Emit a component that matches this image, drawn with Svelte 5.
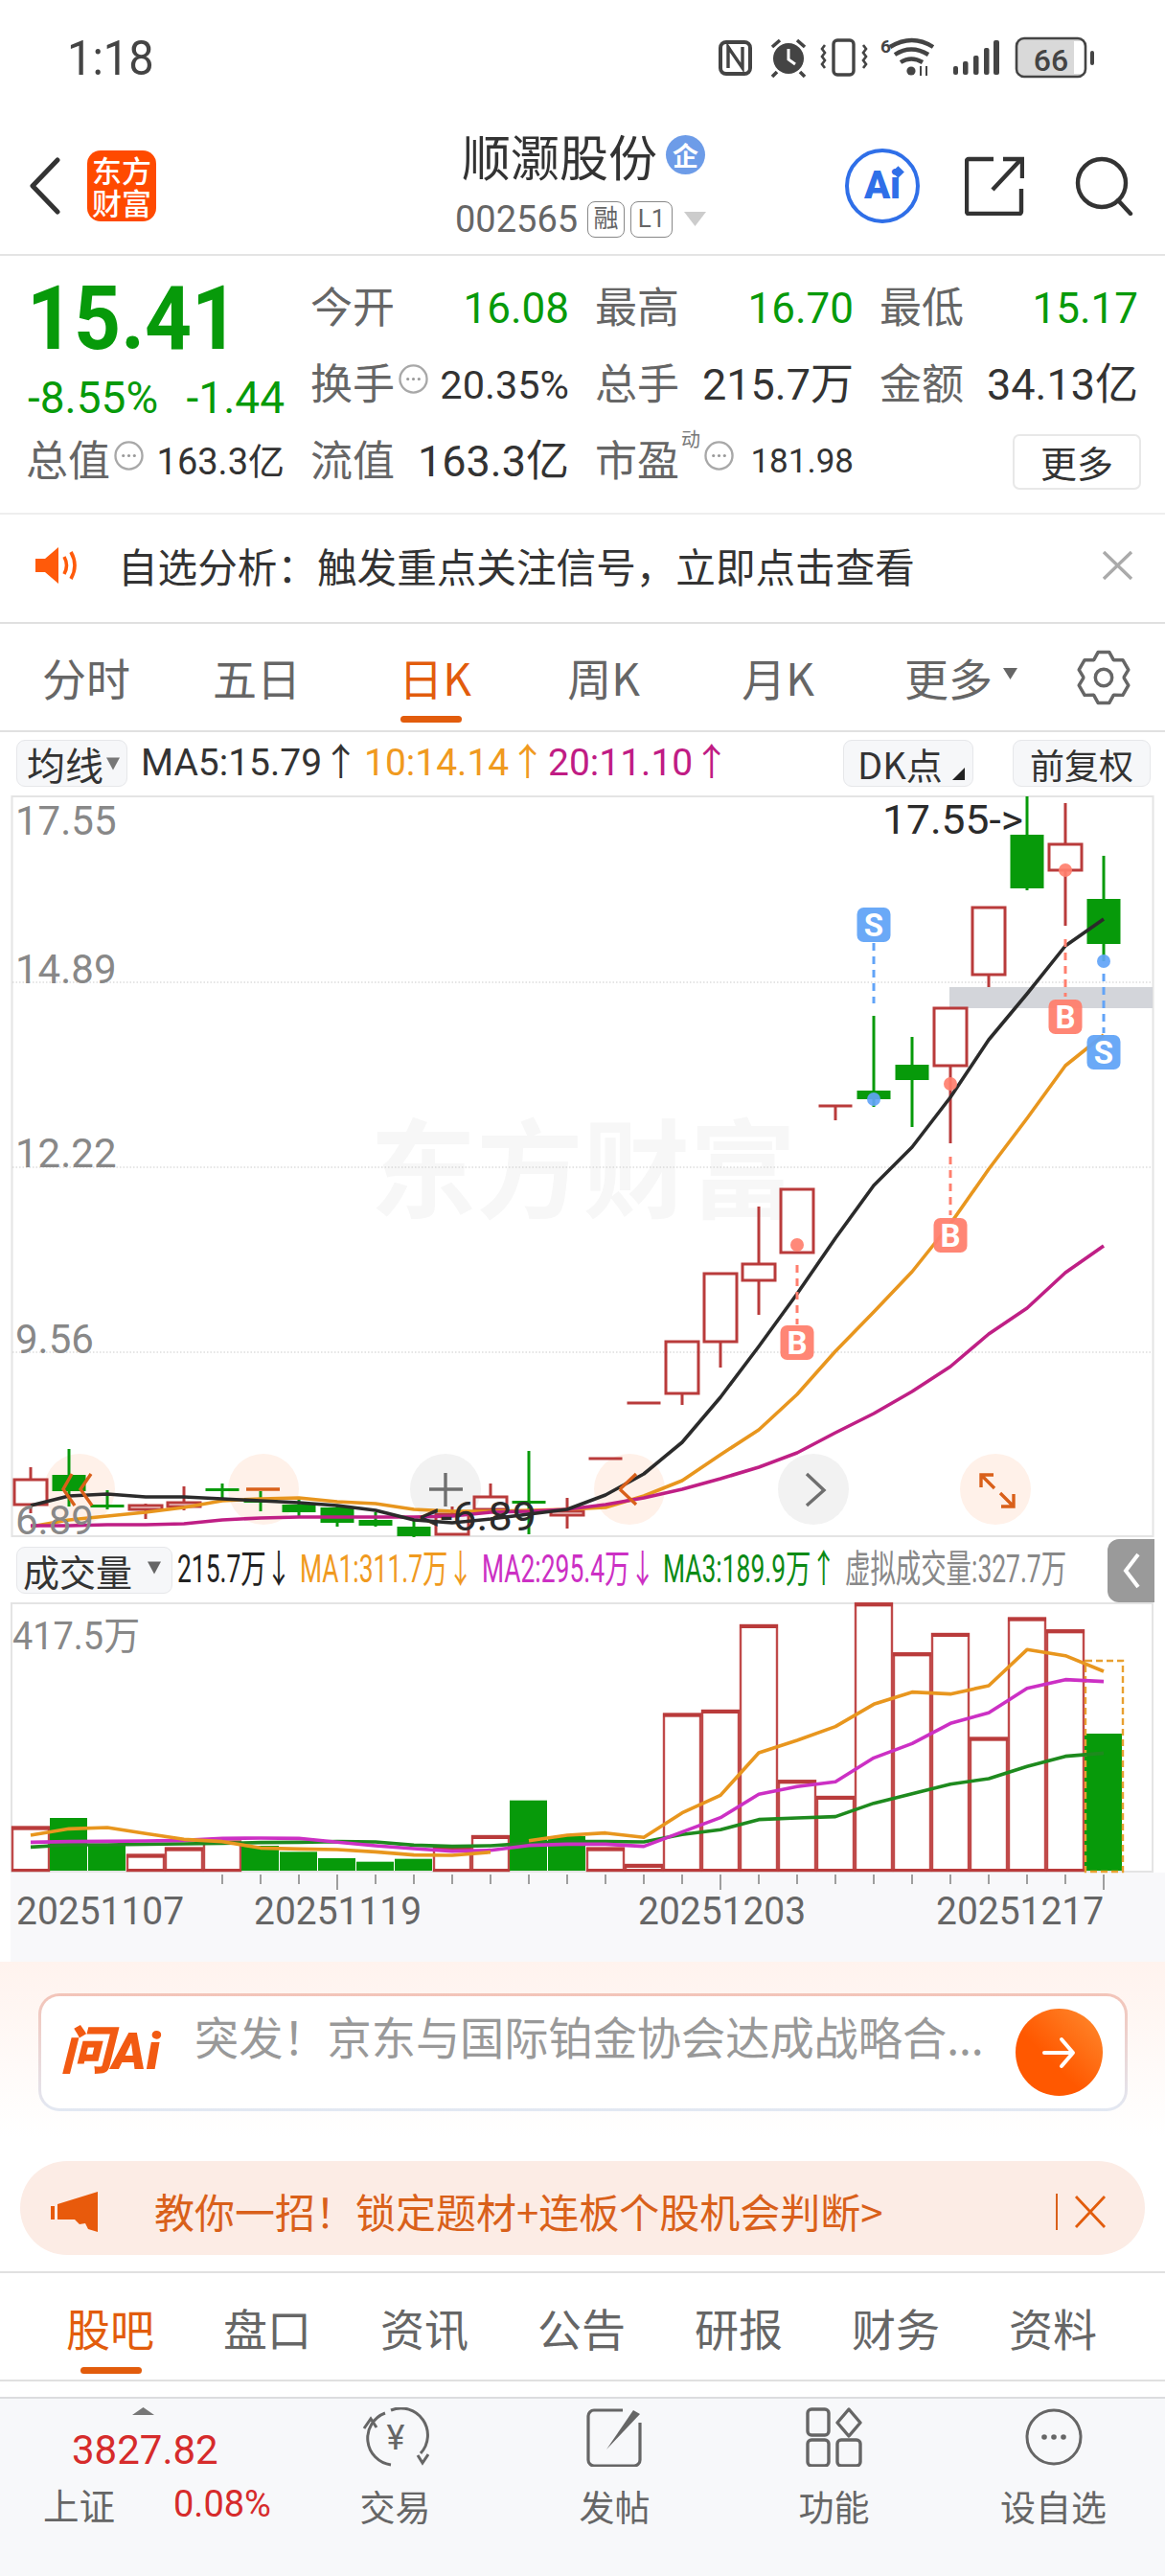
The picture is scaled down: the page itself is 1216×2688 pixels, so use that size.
<script>
  const X = (i) => 32 + 40 * i;
  const poly = (arr, start = 0) => arr.map((y, i) => `${X(i + start)},${y}`).join(' ');

  // [body top, body bottom, wick top, wick bottom, kind]
  const candles = [
    [1544, 1570, 1531, 1579, 'r'], [1539, 1556, 1512, 1572, 'g'], [1570, 1573, 1555, 1575, 'g'],
    [1571, 1575, 1569, 1585, 'r'], [1568, 1572, 1551, 1576, 'r'], [1553, 1555, 1548, 1565, 'g'],
    [1565, 1568, 1556, 1577, 'g'], [1570, 1578, 1565, 1583, 'g'], [1573, 1589, 1570, 1593, 'g'],
    [1586, 1592, 1578, 1593, 'g'], [1593, 1603, 1587, 1604, 'g'], [1580, 1601, 1572, 1601, 'r'],
    [1562, 1575, 1548, 1575, 'r'], [1566, 1568, 1514, 1601, 'g'], [1577, 1581, 1563, 1595, 'r'],
    [1522, 1522, 1522, 1522, 'r'], [1464, 1464, 1464, 1464, 'r'], [1400, 1454, 1400, 1466, 'r'],
    [1329, 1400, 1329, 1427, 'r'], [1319, 1336, 1259, 1372, 'r'], [1241, 1307, 1241, 1307, 'r'],
    [1154, 1154, 1154, 1169, 'r'], [1138, 1147, 1060, 1155, 'g'], [1111, 1127, 1082, 1176, 'g'],
    [1052, 1112, 1052, 1193, 'r'], [947, 1017, 947, 1030, 'r'], [871, 927, 831, 929, 'g'],
    [881, 908, 838, 966, 'r'], [938, 985, 893, 1003, 'g']
  ];

  const maBlack = [1571,1561,1559,1562,1562,1564,1566,1568,1571,1576,1586,1589,1585,1580,1575,1560,1538,1505,1458,1405,1350,1292,1237,1197,1145,1085,1037,987,959];
  const maOrange = [1593,1586,1582,1578,1573,1566,1564,1563,1567,1569,1575,1577,1577,1576,1575,1573,1561,1545,1518,1492,1455,1410,1369,1327,1277,1220,1167,1112,1080];
  const maPink = [1592,1592,1591,1591,1590,1586,1584,1583,1583,1583,1583,1582,1578,1577,1575,1570,1563,1554,1543,1531,1516,1495,1475,1452,1426,1392,1365,1328,1300];

  const gridLines = [1025, 1218, 1411];
  const axisLabels = [['17.55', 871], ['14.89', 1026], ['12.22', 1218], ['9.56', 1412], ['6.89', 1601]];

  const buttons = [[83, 'o'], [275, 'o'], [465, 'n'], [657, 'o'], [849, 'n'], [1039, 'o']];

  const marks = [
    { i: 22, t: 'S', box: 947, dot: 1147, d1: 984, d2: 1047 },
    { i: 28, t: 'S', box: 1080, dot: 1003, d1: 1016, d2: 1078 },
    { i: 27, t: 'B', box: 1043, dot: 908, d1: 980, d2: 1040 },
    { i: 24, t: 'B', box: 1271, dot: 1131, d1: 1207, d2: 1268 },
    { i: 20, t: 'B', box: 1383, dot: 1299, d1: 1320, d2: 1382 }
  ];

  const vy = (z) => 1600 + z / 3;
  const volumes = [
    [920,'r'],[891,'g'],[972,'g'],[1007,'r'],[986,'r'],[965,'r'],[978,'g'],[997,'g'],[1017,'g'],[1028,'g'],
    [1019,'g'],[985,'r'],[948,'r'],[836,'g'],[948,'g'],[986,'r'],[1038,'r'],[566,'r'],[555,'r'],[288,'r'],
    [775,'r'],[825,'r'],[220,'r'],[376,'r'],[315,'r'],[641,'r'],[266,'r'],[304,'r'],[627,'g']
  ].map(([z, k]) => [vy(z), k]);
  const v1 = [945,925,921,940,958,965,985,988,990,997,1007,1008,998,962,945,938,952,875,820,687,648,605,535,497,503,477,364,383,432].map(vy);
  const v2 = [967,965,964,963,961,955,954,955,967,978,987,995,992,977,973,973,980,935,890,817,793,778,703,658,595,562,485,458,464].map(vy);
  const v3 = [982,975,975,973,972,970,968,967,965,966,976,980,978,970,965,965,966,943,928,896,891,887,845,815,785,768,730,698,688].map(vy);
  const ticks = Array.from({ length: 24 }, (_, k) => 232 + 40 * k);
  const dates = [['20251107', 17], ['20251119', 265], ['20251203', 666], ['20251217', 977]];

  function gearPath(cx, cy, R, r, n) {
    let d = '';
    for (let k = 0; k < n; k++) {
      const a = (Math.PI * 2 * k) / n - Math.PI / 2;
      const s = Math.PI / n;
      const p = [[a - s * 0.95, r], [a - s * 0.42, R], [a + s * 0.42, R], [a + s * 0.95, r]];
      for (const [ang, rad] of p) {
        d += `${d ? 'L' : 'M'}${(cx + rad * Math.cos(ang)).toFixed(1)} ${(cy + rad * Math.sin(ang)).toFixed(1)}`;
      }
    }
    return d + 'Z';
  }
  const gear = gearPath(30, 30, 28, 22, 6);

  const topTabs = ['分时', '五日', '日K', '周K', '月K', '更多'];
  const lowerTabs = ['股吧', '盘口', '资讯', '公告', '研报', '财务', '资料'];
</script>

{#snippet info()}
  <svg class="info" viewBox="0 0 32 32"><circle cx="16" cy="16" r="14.5" fill="none" stroke="#a8a8a8" stroke-width="2.4"/><circle cx="10" cy="16" r="1.6" fill="#999"/><circle cx="16" cy="16" r="1.6" fill="#999"/><circle cx="22" cy="16" r="1.6" fill="#999"/></svg>
{/snippet}

<div class="page">
  <header class="status">
    <span class="time">1:18</span>
    <svg class="status-icons" viewBox="750 36 396 52">
      <rect x="752" y="45" width="31" height="33" rx="6" fill="none" stroke="#444" stroke-width="4"/>
      <path d="M760 72V50l15 22V50" fill="none" stroke="#444" stroke-width="3.4"/>
      <circle cx="823" cy="62" r="16" fill="#444"/>
      <path d="M823 52v11l7 5" fill="none" stroke="#fff" stroke-width="3"/>
      <path d="M806 50l8-7M840 50l-8-7M811 76l-5 5M835 76l5 5" stroke="#444" stroke-width="3.6" fill="none"/>
      <rect x="870" y="43" width="21" height="36" rx="4" fill="none" stroke="#444" stroke-width="3.4"/>
      <path d="M861 48l-3 4 3 4-3 4 3 4-3 4 3 4M901 48l3 4-3 4 3 4-3 4 3 4-3 4" fill="none" stroke="#444" stroke-width="2.6"/>
      <text x="919" y="56" class="tiny">6</text>
      <path d="M929 50q23-14 45 0M934 58q17-11 35 0M940 66q11-7 23 0" fill="none" stroke="#444" stroke-width="4.4"/>
      <circle cx="951" cy="75" r="4.6" fill="#444"/>
      <path d="M961 70v10M967 70v10" stroke="#444" stroke-width="2"/>
      <rect x="995" y="70" width="5" height="9" rx="2" fill="#444"/>
      <rect x="1005" y="65" width="5.5" height="14" rx="2" fill="#444"/>
      <rect x="1016" y="59" width="5.5" height="20" rx="2" fill="#444"/>
      <rect x="1027" y="51" width="5.5" height="28" rx="2" fill="#444"/>
      <rect x="1037" y="43" width="6" height="36" rx="2" fill="#444"/>
      <rect x="1062" y="42" width="71" height="38" rx="8" fill="#d9d9d9"/>
      <rect x="1121" y="44" width="11" height="34" fill="#fff"/>
      <rect x="1061" y="41" width="72" height="40" rx="8" fill="none" stroke="#444" stroke-width="2.6"/>
      <rect x="1138" y="54" width="4" height="15" rx="2" fill="#444"/>
      <text x="1097" y="75" class="batt">66</text>
    </svg>
  </header>

  <nav class="nav">
    <svg class="back" viewBox="0 0 34 60"><path d="M30 3L4 30l26 27" fill="none" stroke="#333" stroke-width="5" stroke-linecap="round" stroke-linejoin="round"/></svg>
    <div class="logo"><span>东方</span><span>财富</span></div>
    <div class="title">
      <div class="title-row"><span class="name">顺灏股份</span><span class="qi">企</span></div>
      <div class="code-row">
        <span class="code">002565</span><span class="tag">融</span><span class="tag">L1</span>
        <svg class="code-tri" viewBox="0 0 23 15"><path d="M0 0h23L11.500 15z" fill="#ccc"/></svg>
      </div>
    </div>
    <div class="nav-actions">
      <div class="ai"><span>Ai</span><i></i></div>
      <svg class="share" viewBox="0 0 62 62"><path d="M30 3H4a2 2 0 0 0-2 2v53a2 2 0 0 0 2 2h53a2 2 0 0 0 2-2V34" fill="none" stroke="#333" stroke-width="4.400"/><path d="M29 35L58 4M40 3h20v20" fill="none" stroke="#333" stroke-width="4.400"/></svg>
      <svg class="search" viewBox="0 0 62 62"><circle cx="29" cy="28" r="25" fill="none" stroke="#333" stroke-width="4.400"/><path d="M46 46l13 14" stroke="#333" stroke-width="4.400" stroke-linecap="round"/></svg>
    </div>
  </nav>

  <section class="quote">
    <div class="price-cell">
      <div class="price">15.41</div>
      <div class="changes"><span>-8.55%</span><span>-1.44</span></div>
    </div>
    <div class="cell"><span class="lb">今开</span><span class="up">16.08</span></div>
    <div class="cell"><span class="lb">最高</span><span class="up">16.70</span></div>
    <div class="cell"><span class="lb">最低</span><span class="up">15.17</span></div>
    <div class="cell"><span class="lb">换手{@render info()}</span><span class="val pct">20.35%</span></div>
    <div class="cell"><span class="lb">总手</span><span class="val">215.7万</span></div>
    <div class="cell"><span class="lb">金额</span><span class="val">34.13亿</span></div>
    <div class="cell"><span class="lb">总值{@render info()}</span><span class="val small">163.3亿</span></div>
    <div class="cell"><span class="lb">流值</span><span class="val">163.3亿</span></div>
    <div class="cell"><span class="lb">市盈<sup>动</sup>{@render info()}</span><span class="val smaller">181.98</span></div>
    <div class="cell end"><button class="more">更多</button></div>
  </section>

  <section class="notice">
    <svg class="speaker" viewBox="0 0 48 40"><path d="M0 13h10L24 1v38L10 27H0z" fill="#ff5a0a"/><path d="M30 11q5 9 0 18M37 6q8 14 0 28" fill="none" stroke="#ff5a0a" stroke-width="3.600"/></svg>
    <span class="notice-text">自选分析：触发重点关注信号，立即点击查看</span>
    <svg class="close" viewBox="0 0 33 30"><path d="M2 1l29 28M31 1L2 29" stroke="#aaa" stroke-width="3.400" fill="none"/></svg>
  </section>

  <section class="tabs">
    {#each topTabs as t, i}
      <div class="tab" class:on={i === 2}>{t}{#if i === 5}<svg class="more-tri" viewBox="0 0 15 12"><path d="M0 0h15L7.500 12z" fill="#666"/></svg>{/if}</div>
    {/each}
    <svg class="gear" viewBox="0 0 60 60"><path d={gear} fill="none" stroke="#666" stroke-width="3.600" stroke-linejoin="round"/><circle cx="30" cy="30" r="9" fill="none" stroke="#666" stroke-width="3.600"/></svg>
  </section>

  <section class="ma-row">
    <div class="pill junxian">均线<svg class="pill-tri" viewBox="0 0 15 14"><path d="M0 0h15L7.500 14z" fill="#777"/></svg></div>
    <span class="ma black">MA5:15.79↑</span>
    <span class="ma orange">10:14.14↑</span>
    <span class="ma pink">20:11.10↑</span>
    <div class="pill dk">DK点<svg class="dk-tri" viewBox="0 0 14 14"><path d="M14 0v14H0z" fill="#222"/></svg></div>
    <div class="pill fq">前复权</div>
  </section>

  <svg class="price-chart" viewBox="0 830 1216 774">
    <text x="386" y="1263" class="wm" textLength="445" lengthAdjust="spacingAndGlyphs">东方财富</text>
    <rect x="12.500" y="831" width="1191" height="772" fill="none" stroke="#e4e4e4" stroke-width="2"/>
    {#each gridLines as y}
      <line x1="13" x2="1203" y1={y} y2={y} class="grid"/>
    {/each}
    <rect x="991" y="1030" width="212" height="22" fill="#d3d5da"/>
    {#each buttons as [cx, k]}
      <circle {cx} cy="1554" r="37" fill={k === 'o' ? '#fff1e9' : '#f2f2f2'}/>
    {/each}

    {#each candles as [t, b, wt, wb, k], i}
      {@const c = k === 'r' ? '#b93b3b' : '#079a0a'}
      {#if wt < t}<line x1={X(i)} x2={X(i)} y1={wt} y2={t} stroke={c} stroke-width="3"/>{/if}
      {#if wb > b}<line x1={X(i)} x2={X(i)} y1={b} y2={wb} stroke={c} stroke-width="3"/>{/if}
      {#if k === 'g'}
        <rect x={X(i) - 17.500} y={t} width="35" height={Math.max(b - t, 3)} fill={c}/>
      {:else if b === t}
        <line x1={X(i) - 17.500} x2={X(i) + 17.500} y1={t} y2={t} stroke={c} stroke-width="3"/>
      {:else}
        <rect x={X(i) - 17} y={t} width="34" height={b - t} fill="none" stroke={c} stroke-width="3"/>
      {/if}
    {/each}

    <polyline points={poly(maOrange)} class="l" stroke="#e8961e"/>
    <polyline points={poly(maPink)} class="l" stroke="#bf1f85"/>
    <polyline points={poly(maBlack)} class="l" stroke="#2b2b2b"/>

    {#each marks as m}
      {@const col = m.t === 'S' ? '#62a4f7' : '#ff7f6e'}
      <line x1={X(m.i)} x2={X(m.i)} y1={m.d1} y2={m.d2} stroke={col} stroke-width="3" stroke-dasharray="8 6"/>
      <circle cx={X(m.i)} cy={m.dot} r="7" fill={col} opacity="0.92"/>
      <rect x={X(m.i) - 17.500} y={m.box} width="35" height="36" rx="7" fill={col} opacity="0.95"/>
      <text x={X(m.i)} y={m.box + 30} class="mk">{m.t}</text>
    {/each}

    <g class="ic ico">
      <path d="M75 1538l-9 16 12 17M95 1538l-11 16 12 17"/>
      <path d="M257 1554h35"/>
      <path d="M647 1554l17-16M647 1554l17 16"/>
      <path d="M1024 1552v-13h13M1024 1539l14 14M1058 1559v13h-13M1058 1572l-14-14"/>
    </g>
    <g class="ic icn">
      <path d="M448 1554h35M465 1537v35"/>
      <path d="M842 1538l18 17-18 16"/>
    </g>

    {#each axisLabels as [t, y]}
      <text x="16" {y} class="axis">{t}</text>
    {/each}
    <text x="921" y="870" class="mark" textLength="147" lengthAdjust="spacingAndGlyphs">17.55-&gt;</text>
    <text x="437" y="1597" class="mark" textLength="123" lengthAdjust="spacingAndGlyphs">&lt;-6.89</text>
  </svg>

  <section class="vol-head">
    <div class="pill vol-pill">成交量<svg class="vol-tri" viewBox="0 0 15 14"><path d="M0 0h15L7.500 14z" fill="#666"/></svg></div>
    <span class="sq w1 black"><b>215.7万↓</b></span>
    <span class="sq w2 orange"><b>MA1:311.7万↓</b></span>
    <span class="sq w2 violet"><b>MA2:295.4万↓</b></span>
    <span class="sq w2 green"><b>MA3:189.9万↑</b></span>
    <span class="sq w3 gray"><b>虚拟成交量:327.7万</b></span>
    <div class="collapse"><svg viewBox="0 0 20 40"><path d="M17 3L4 20l13 17" fill="none" stroke="#fff" stroke-width="4"/></svg></div>
  </section>

  <svg class="vol-chart" viewBox="0 1672 1216 375">
    <rect x="11" y="1954" width="1205" height="93" fill="#f8f8fa"/>
    <rect x="12" y="1673" width="1191" height="280" fill="none" stroke="#e4e4e4" stroke-width="2"/>
    {#each volumes as [t, k], i}
      {@const x0 = 12 + 40 * i}
      {#if k === 'g'}
        <rect x={x0} y={t} width="39" height={1952 - t} fill="#079a0a"/>
      {:else}
        <rect x={x0 + 1} y={t} width="38" height={1952 - t} fill="none" stroke="#c04a4a" stroke-width="2.400"/>
        <rect x={x0} y={t - 1} width="40" height="4" fill="#b93b3b"/>
        <rect x={x0} y="1950" width="40" height="3" fill="#b93b3b"/>
      {/if}
    {/each}
    <rect x="1133" y="1733" width="39" height="220" fill="none" stroke="#e8a030" stroke-width="2.400" stroke-dasharray="7 4"/>
    <polyline points={poly(v3)} class="l" stroke="#1e8a1e"/>
    <polyline points={poly(v2)} class="l" stroke="#cc30c4"/>
    <polyline points={poly(v1.slice(0, 13))} class="l" stroke="#e8961e"/>
    <polyline points={poly(v1.slice(13), 13)} class="l" stroke="#e8961e"/>
    <text x="13" y="1721" class="vlabel" textLength="133" lengthAdjust="spacingAndGlyphs">417.5万</text>
    {#each ticks as x}
      {@const long = x === 352 || x === 752 || x === 1152}
      <line x1={x} x2={x} y1="1956" y2={long ? 1972 : 1966} stroke="#888" stroke-width="1.600"/>
    {/each}
    {#each dates as [d, x]}
      <text {x} y="2008" class="date" textLength="175" lengthAdjust="spacingAndGlyphs">{d}</text>
    {/each}
  </svg>

  <section class="ask">
    <div class="ask-card">
      <span class="ask-logo">问Ai</span>
      <span class="ask-text">突发！京东与国际铂金协会达成战略合...</span>
      <div class="ask-go"><svg viewBox="0 0 40 40"><path d="M4 20h29M22 6l12 14-12 14" fill="none" stroke="#fff" stroke-width="4" stroke-linecap="round" stroke-linejoin="round"/></svg></div>
    </div>
  </section>

  <section class="promo-wrap">
    <div class="promo">
      <svg class="horn" viewBox="0 0 49 42"><path d="M0 15h4v14H0zM7 13L49 0v42l-10-3-3-6-6 1-5-5H7z" fill="#e85a0c"/></svg>
      <span class="promo-text">教你一招！锁定题材+连板个股机会判断&gt;</span>
      <i class="promo-sep"></i>
      <svg class="promo-x" viewBox="0 0 34 34"><path d="M2 1l30 32M32 1L2 33" stroke="#e25c0c" stroke-width="2.800" fill="none"/></svg>
    </div>
  </section>

  <section class="lower-tabs">
    {#each lowerTabs as t, i}
      <div class="ltab" class:on={i === 0}>{t}</div>
    {/each}
  </section>

  <div class="spacer"></div>

  <footer class="bottom">
    <div class="index">
      <svg class="idx-tri" viewBox="0 0 23 8"><path d="M11.500 0L23 8H0z" fill="#777"/></svg>
      <div class="idx-num">3827.82</div>
      <div class="idx-row"><span class="idx-name">上证</span><span class="idx-pct">0.08%</span></div>
    </div>
    <div class="act">
      <svg viewBox="0 0 70 62"><path d="M24 6A28 28 0 0 0 30 60M30 3a28 28 0 0 1 31 45M2 22l7-10 6 9M58 50l5 8 6-9" fill="none" stroke="#666" stroke-width="3"/><text x="35" y="44" class="yen">¥</text></svg>
      <span>交易</span>
    </div>
    <div class="act">
      <svg viewBox="0 0 60 62"><path d="M38 3H8a6 6 0 0 0-6 6v46a6 6 0 0 0 6 6h42a6 6 0 0 0 6-6V16" fill="none" stroke="#666" stroke-width="3.200"/><path d="M21 44L49 3l7 4z" fill="#666"/></svg>
      <span>发帖</span>
    </div>
    <div class="act">
      <svg viewBox="0 0 60 62"><g fill="none" stroke="#666" stroke-width="3.400"><rect x="2" y="2" width="22" height="27" rx="4"/><rect x="2" y="34" width="22" height="27" rx="4"/><rect x="33" y="34" width="24" height="27" rx="4"/><path d="M45 2l12 14-12 14-12-14z" stroke-linejoin="round"/></g></svg>
      <span>功能</span>
    </div>
    <div class="act">
      <svg viewBox="0 0 60 62"><circle cx="30" cy="31" r="28" fill="none" stroke="#666" stroke-width="3"/><circle cx="20" cy="31" r="2.800" fill="#666"/><circle cx="30" cy="31" r="2.800" fill="#666"/><circle cx="40" cy="31" r="2.800" fill="#666"/></svg>
      <span>设自选</span>
    </div>
  </footer>
</div>

<style>
  :global(body) { margin: 0; background: #fff; }
  .page {
    width: 1216px; height: 2688px; overflow: hidden; background: #fff; display: flex; flex-direction: column;
    font-family: Roboto, "Noto Sans CJK SC", sans-serif; color: #333;
  }
  svg { display: block; flex: none; }

  .status { height: 122px; flex: none; display: flex; align-items: center; justify-content: space-between; padding: 0 70px; box-sizing: border-box; }
  .time { font-size: 50px; line-height: 50px; color: #444; transform: scaleX(.94); transform-origin: left; }
  .status-icons { width: 396px; height: 52px; margin-right: 0; }
  .tiny { font: 700 19px Roboto, sans-serif; fill: #444; }
  .batt { font: 500 32px Roboto, sans-serif; fill: #444; text-anchor: middle; }

  .nav { height: 143px; flex: none; display: flex; align-items: center; border-bottom: 2px solid #e4e4e4; box-sizing: content-box; }
  .back { width: 34px; height: 60px; margin-left: 30px; }
  .logo {
    width: 72px; height: 74px; margin-left: 27px; border-radius: 14px; background: #ff4a00; color: #fff; display: flex; flex-direction: column; align-items: center; justify-content: center;
    font: 500 31px/34px "Noto Sans CJK SC", sans-serif;
  }
  .logo span { display: block; height: 34px; }
  .title { margin-left: 312px; width: 262px; display: flex; flex-direction: column; }
  .title-row { display: flex; align-items: center; padding-left: 7px; height: 58px; margin-top: -6px; }
  .name { font: 400 51px/58px "Noto Sans CJK SC", sans-serif; color: #333; white-space: nowrap; }
  .qi { width: 41px; height: 41px; border-radius: 50%; background: #6d9ce8; color: #fff; margin-left: 9px; font: 700 27px/41px "Noto Sans CJK SC", sans-serif; text-align: center; }
  .code-row { display: flex; align-items: center; height: 40px; margin-top: 18px; }
  .code { font-size: 38px; line-height: 40px; color: #666; width: 138px; }
  .tag { width: 39px; height: 38px; box-sizing: border-box; border: 1.5px solid #888; border-radius: 8px; color: #666; font: 400 26px/35px Roboto, "Noto Sans CJK SC", sans-serif; text-align: center; margin-right: 6px; }
  .tag + .tag { width: 44px; }
  .code-tri { width: 23px; height: 15px; margin-left: 6px; }
  .nav-actions { margin-left: auto; margin-right: 33px; display: flex; align-items: center; }
  .ai {
    position: relative; width: 78px; height: 78px; box-sizing: border-box; border: 4px solid #2f6fe8; border-radius: 50%; color: #2f6fe8;
    font: 900 40px/70px Roboto, sans-serif; text-align: center;
  }
  .ai i { position: absolute; top: 16px; right: 14px; width: 9px; height: 9px; background: #2f6fe8; transform: rotate(45deg); }
  .share { width: 62px; height: 62px; margin-left: 47px; }
  .search { width: 62px; height: 62px; margin-left: 52px; }

  .quote {
    height: 270px; flex: none; box-sizing: border-box; padding: 15px 25px 0 29px; border-bottom: 2px solid #eee;
    display: grid; grid-template-columns: repeat(4, 268px); column-gap: 29px; grid-template-rows: repeat(3, 80px);
    font-size: 44px; line-height: 50px; white-space: nowrap;
  }
  .price-cell { grid-row: 1 / span 2; display: flex; flex-direction: column; }
  .price { color: #079a0a; font-weight: 700; font-size: 92px; line-height: 92px; margin: 5px 0 0 -1px; transform: scaleX(.93); transform-origin: left; }
  .changes { display: flex; justify-content: space-between; color: #079a0a; margin-top: 11px; font-size: 46px; }
  .cell { display: flex; align-items: center; justify-content: space-between; }
  .cell.end { justify-content: flex-end; }
  .lb { color: #666; display: flex; align-items: center; position: relative; margin-left: -2px; }
  .up { color: #079a0a; }
  .val { color: #333; font-size: 45px; }
  .val.pct { font-size: 41.500px; }
  .val.small { font-size: 38px; }
  .val.smaller { font-size: 35px; }
  .info { width: 31px; height: 31px; margin: -14px 0 0 4px; }
  sup { font-size: 20px; line-height: 20px; color: #777; align-self: flex-start; margin: -8px 0 0 2px; }
  .more {
    width: 134px; height: 58px; margin-right: -3px; border: 2px solid #e8e8e8; border-radius: 7px; background: #fff; padding: 0;
    font: 400 38px/54px "Noto Sans CJK SC", sans-serif; color: #333;
  }

  .notice { height: 114px; flex: none; box-sizing: border-box; display: flex; align-items: center; padding: 0 33px 6px 37px; border-bottom: 2px solid #e0e0e0; }
  .speaker { width: 48px; height: 40px; }
  .notice-text { margin-left: 38px; font: 400 41.6px/50px "Noto Sans CJK SC", sans-serif; color: #333; white-space: nowrap; }
  .close { width: 33px; height: 30px; margin-left: auto; }

  .tabs { height: 113px; flex: none; box-sizing: border-box; display: grid; grid-template-columns: 180px 176px 196px 156px 208px 174px 1fr; align-items: center; border-bottom: 2px solid #e0e0e0; font: 400 46px/112px "Noto Sans CJK SC", Roboto, sans-serif; color: #666; }
  .tab { position: relative; display: flex; align-items: center; justify-content: center; height: 111px; padding-bottom: 2px; box-sizing: border-box; }
  .tab.on { color: #e25c0c; }
  .tab.on::after { content: ""; position: absolute; left: 62px; width: 64px; height: 7px; bottom: 8px; border-radius: 4px; background: #e25c0c; }
  .more-tri { width: 15px; height: 12px; margin-left: 11px; margin-top: -6px; }
  .gear { width: 58px; height: 58px; margin-left: 33px; }

  .ma-row { height: 66px; flex: none; display: flex; align-items: flex-start; padding: 8px 15px 0 17px; box-sizing: border-box; white-space: nowrap; }
  .pill { box-sizing: border-box; height: 49px; border: 1.5px solid #e6e7ea; border-radius: 9px; background: #f6f7f9; display: flex; align-items: center; font: 400 40px/46px "Noto Sans CJK SC", Roboto, sans-serif; color: #333; position: relative; }
  .junxian { width: 116px; padding-left: 10px; }
  .pill-tri { width: 14px; height: 14px; margin-left: 3px; }
  .ma { font-size: 39px; line-height: 49px; }
  .ma.black { color: #333; margin-left: 14px; width: 233px; }
  .orange { color: #f09a1f; }
  .pink { color: #c01c84; }
  .ma.orange { width: 192px; }
  .dk { width: 136px; margin-left: auto; padding-left: 14px; font-size: 38px; }
  .dk-tri { position: absolute; right: 8px; bottom: 6px; width: 13px; height: 13px; }
  .fq { width: 144px; margin-left: 41px; justify-content: center; font-size: 36px; }

  .price-chart { width: 1216px; height: 774px; }
  .wm { font: 700 112px "Noto Sans CJK SC", sans-serif; fill: #f7f7f7; }
  .grid { stroke: #ccc; stroke-width: 1.200; stroke-dasharray: 1.500 2; }
  .l { fill: none; stroke-width: 3.600; stroke-linejoin: round; }
  .mk { font: 700 33px Roboto, sans-serif; fill: #fff; text-anchor: middle; }
  .ic path { fill: none; stroke-width: 3.400; }
  .ico path { stroke: #d9601a; }
  .icn path { stroke: #6f6f6f; }
  .axis { font: 400 42px Roboto, sans-serif; fill: #888; }
  .mark { font: 400 42px Roboto, sans-serif; fill: #2b2b2b; }

  .vol-head { height: 68px; flex: none; display: flex; align-items: flex-start; padding-left: 17px; box-sizing: border-box; white-space: nowrap; }
  .vol-pill { width: 163px; height: 49px; margin-top: 10px; padding-left: 6px; font-size: 38px; }
  .vol-tri { width: 14px; height: 14px; margin-left: 16px; margin-top: -6px; }
  .sq { display: block; height: 68px; line-height: 68px; font-size: 40px; flex: none; }
  .sq b { display: inline-block; font-weight: 400; transform: scaleX(.66); transform-origin: left; }
  .black { color: #222; }
  .violet { color: #cc30c4; }
  .green { color: #0b8a15; }
  .gray { color: #888; }
  .w1 { width: 128px; margin-left: 5px; }
  .w2 { width: 189.5px; }
  .w3 { width: 260px; margin-left: 0; }
  .collapse { margin-left: auto; margin-right: 11px; width: 49px; height: 66px; border-radius: 12px 0 0 12px; background: #9a9a9a; display: flex; align-items: center; justify-content: center; margin-top: 2px; }
  .collapse svg { width: 20px; height: 40px; }

  .vol-chart { width: 1216px; height: 375px; }
  .vlabel { font: 400 40px Roboto, "Noto Sans CJK SC", sans-serif; fill: #888; }
  .date { font: 400 40px Roboto, sans-serif; fill: #666; }

  .ask { height: 183px; flex: none; padding: 33px 39px 0 40px; box-sizing: border-box; background: linear-gradient(#fff3ee, #fff); }
  .ask-card {
    height: 123px; box-sizing: border-box; border-radius: 22px; border: 3px solid transparent;
    background: linear-gradient(#fff, #fff) padding-box, linear-gradient(#f3c4b8, #e2e8f3) border-box;
    display: flex; align-items: flex-start; padding-left: 20px; position: relative;
  }
  .ask-logo { font: italic 900 54px/52px Roboto, "Noto Sans CJK SC", sans-serif; color: #f25a12; margin-top: 32px; width: 140px; white-space: nowrap; }
  .ask-text { font: 400 46.200px/50px "Noto Sans CJK SC", sans-serif; color: #999; white-space: nowrap; margin-top: 16px; }
  .ask-go { position: absolute; right: 23px; top: 13px; width: 91px; height: 91px; border-radius: 50%; background: linear-gradient(45deg, #ff5800 40%, #ff8c30); display: flex; align-items: center; justify-content: center; }
  .ask-go svg { width: 40px; height: 40px; }

  .promo-wrap { height: 142px; flex: none; box-sizing: border-box; padding: 25px 21px 0; border-bottom: 2px solid #e0e0e0; }
  .promo { height: 98px; border-radius: 49px; background: #fcece5; display: flex; align-items: center; padding-left: 32px; }
  .horn { width: 49px; height: 42px; margin-top: 8px; }
  .promo-text { margin-left: 59px; font: 400 42px/50px "Noto Sans CJK SC", Roboto, sans-serif; color: #d9601a; white-space: nowrap; width: 941px; margin-top: 5px; }
  .promo-sep { width: 1.500px; height: 38px; background: #d9601a; margin-top: 8px; }
  .promo-x { width: 34px; height: 34px; margin-left: 17px; margin-top: 8px; }

  .lower-tabs { height: 113px; flex: none; box-sizing: border-box; padding-left: 33px; display: grid; grid-template-columns: repeat(7, 164px); border-bottom: 2px solid #e0e0e0; font: 400 46px/112px "Noto Sans CJK SC", sans-serif; color: #666; text-align: center; }
  .ltab { position: relative; }
  .ltab.on { color: #e25c0c; }
  .ltab.on::after { content: ""; position: absolute; left: 51px; bottom: 7px; width: 64px; height: 7px; border-radius: 4px; background: #e25c0c; }

  .spacer { height: 16px; flex: none; }

  .bottom { flex: 1; background: #f7f8fa; border-top: 2px solid #dcdcdf; display: grid; grid-template-columns: 298px repeat(4, 229px); align-items: start; box-sizing: border-box; }
  .index { position: relative; padding: 9px 0 0 45px; display: flex; flex-direction: column; }
  .idx-tri { width: 23px; height: 8px; margin-left: 93px; }
  .idx-num { font-size: 42px; line-height: 44px; color: #d62b2b; margin: 15px 0 0 30px; }
  .idx-row { display: flex; margin-top: 12px; align-items: center; line-height: 44px; }
  .idx-name { font: 400 37.500px/44px "Noto Sans CJK SC", sans-serif; color: #666; width: 136px; }
  .idx-pct { font-size: 38px; color: #d62b2b; }
  .act { display: flex; flex-direction: column; align-items: center; padding-top: 9px; font: 400 37px/44px "Noto Sans CJK SC", sans-serif; color: #666; white-space: nowrap; }
  .act svg { width: 70px; height: 62px; }
  .act span { margin-top: 19px; }
  .yen { font: 400 36px Roboto, sans-serif; fill: #666; text-anchor: middle; }
</style>
